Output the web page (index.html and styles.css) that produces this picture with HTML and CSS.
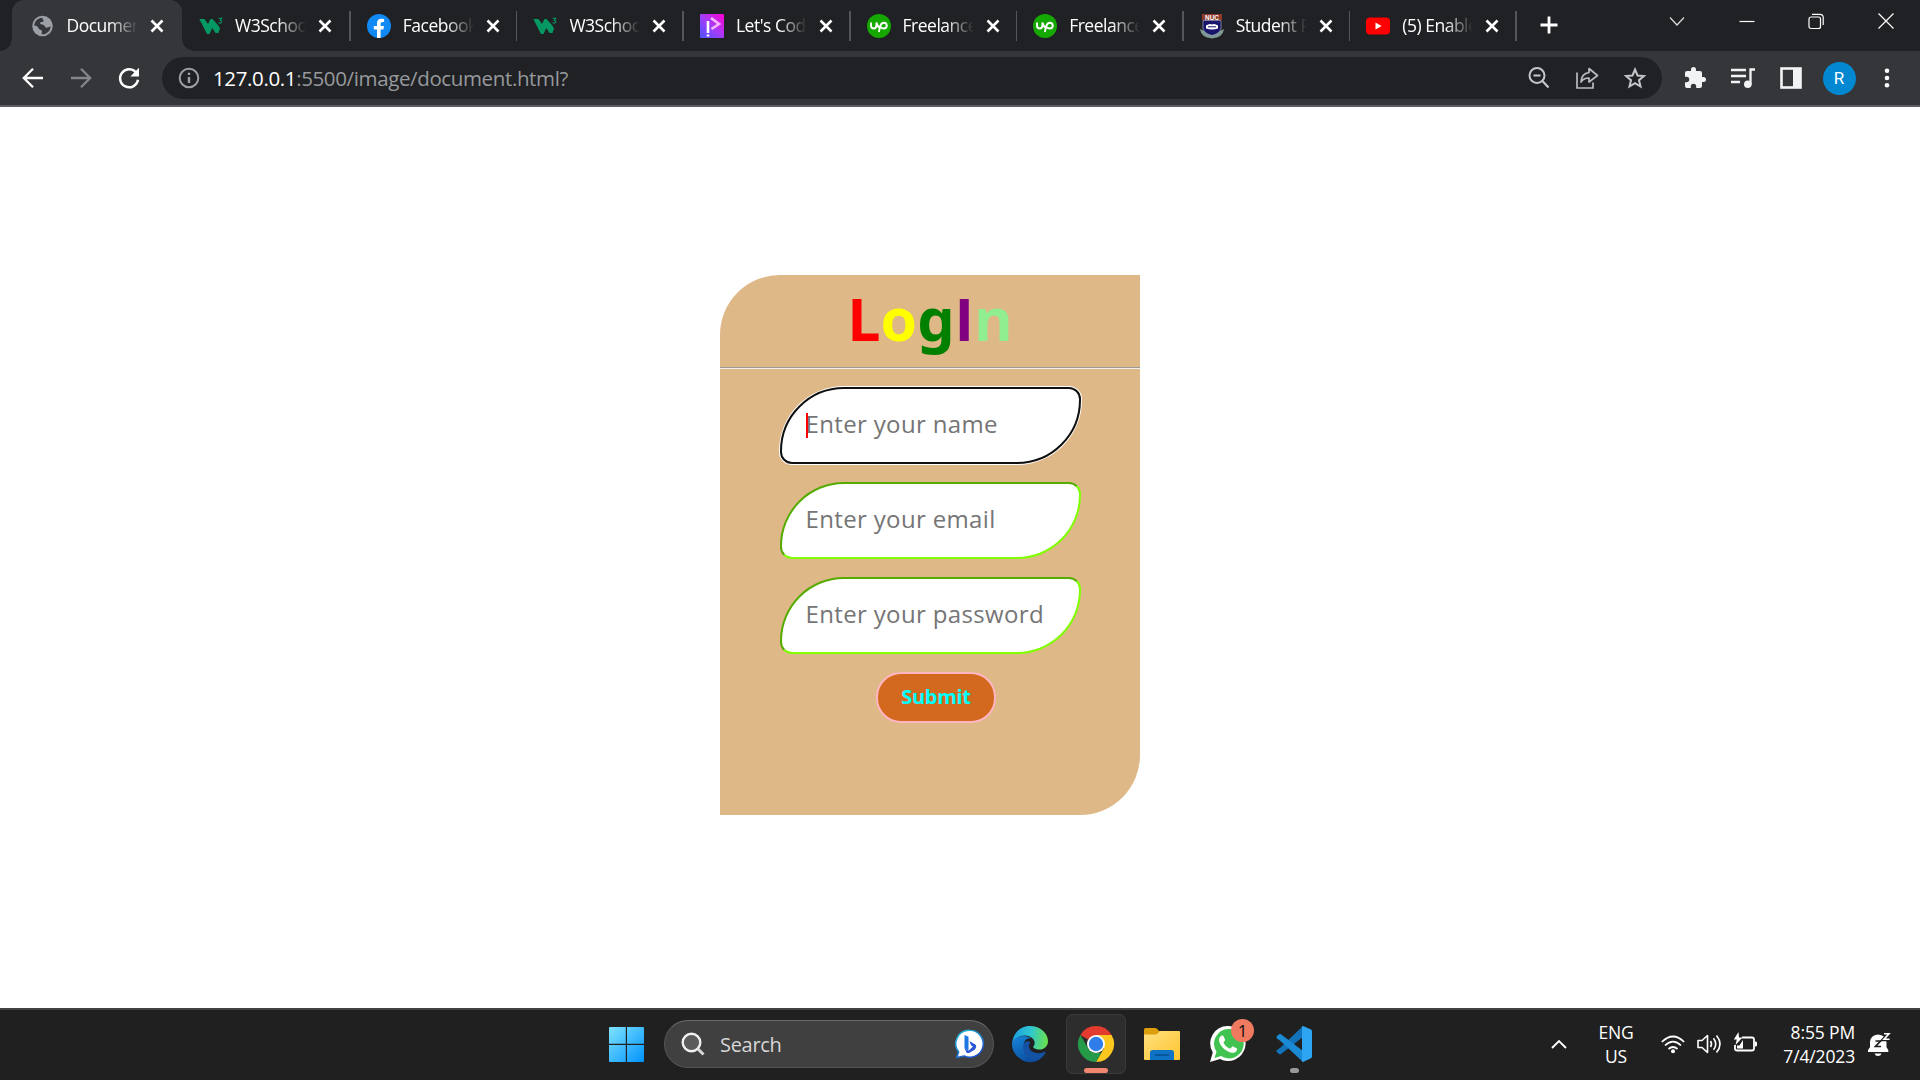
FILE: index.html
```html
<!DOCTYPE html>
<html lang="en">
<head>
<meta charset="utf-8">
<title>Document</title>
<link rel="stylesheet" href="styles.css">
</head>
<body>
<svg width="0" height="0" class="defs">
  <defs>
    <symbol id="close" viewBox="0 0 14 14"><path d="M1.5 1.5 12.5 12.5M12.5 1.5 1.5 12.5" stroke="#fff" stroke-width="2.6" fill="none"/></symbol>
    <symbol id="w3" viewBox="0 0 24 24"><path d="M0.300 5H5.500l3.500 5L11.500 5h2l5.800 6.500 1.700 3-1.500 4.500h-3l-3.200-5L10.500 20H8z" fill="#059862"/><path d="M19.500 4.200h3.300l-1.500 2q2 .4 1.200 2.200-1.200 1.400-3 .2" fill="none" stroke="#059862" stroke-width="1.1"/></symbol>
    <symbol id="up" viewBox="0 0 24 24"><circle cx="12" cy="12" r="12" fill="#14a800"/><path d="M4 8.5v3.400q.2 2.600 2.700 2.600t2.700-2.600V8.500q1.200 4 3.600 6M11.800 18l1.500-6q.9-3.300 3.600-3.300 2.800.2 2.900 2.900-.2 2.800-2.900 2.900-2 0-3.600-1.700" fill="none" stroke="#fff" stroke-width="1.900"/></symbol>
  </defs>
</svg>

<header class="tabs">
  <div class="tab active">
    <svg class="fav" viewBox="0 0 24 24"><circle cx="12" cy="12" r="10.700" fill="#9aa0a6"/><path d="M12 3.300c-.4 2 1.500 2.200 1.200 3.600-.6 1.600-3.400.4-3.700 2.300-.2 1.600 1.900 1 3.200 1.500 2 .8 1.500 3 3.500 3.100 1.500 0 2.400-1.200 4.300-1.300-.2 4.200-3.600 8-8 8.200l-1.600-.2c.4-1.800 1-2.700.2-3.800-.8-1.200-3-.8-3.400-2.700-.3-1.300-2.300-2.500-4.300-2.600C3.500 7.600 7 3.500 12 3.300z" fill="#35363a"/></svg>
    <span class="tab-title">Document</span><svg class="x"><use href="#close"/></svg>
  </div>
  <div class="tab wide"><svg class="fav"><use href="#w3"/></svg><span class="tab-title">W3Schools</span><svg class="x"><use href="#close"/></svg></div>
  <div class="tab">
    <svg class="fav" viewBox="0 0 24 24"><circle cx="12" cy="12" r="12" fill="#1089f5"/><path d="M10 24v-8.500H6.800V12H10V9.300C10 6 12 4.700 14.500 4.700q1.500 0 2.600.3v3h-1.600q-1.900 0-1.900 1.800V12H17l-.6 3.500h-2.800V24z" fill="#fff"/></svg>
    <span class="tab-title">Facebook</span><svg class="x"><use href="#close"/></svg>
  </div>
  <div class="tab"><svg class="fav"><use href="#w3"/></svg><span class="tab-title">W3Schools</span><svg class="x"><use href="#close"/></svg></div>
  <div class="tab">
    <svg class="fav" viewBox="0 0 24 24"><defs><linearGradient id="lc" x1="0" y1="1" x2="1" y2="0"><stop offset=".1" stop-color="#5b50ff"/><stop offset=".5" stop-color="#a53cf5"/><stop offset="1" stop-color="#ff00d4"/></linearGradient></defs><rect width="24" height="24" rx="1" fill="url(#lc)"/><path d="M8 7v12M8 20.500v2" stroke="#fff" stroke-width="2.600"/><path d="M11 4 19 10l-7.500 5" stroke="#f5b8ff" stroke-width="2.600" fill="none"/></svg>
    <span class="tab-title">Let's Code</span><svg class="x"><use href="#close"/></svg>
  </div>
  <div class="tab"><svg class="fav"><use href="#up"/></svg><span class="tab-title">Freelancer</span><svg class="x"><use href="#close"/></svg></div>
  <div class="tab"><svg class="fav"><use href="#up"/></svg><span class="tab-title">Freelancer</span><svg class="x"><use href="#close"/></svg></div>
  <div class="tab">
    <svg class="fav" viewBox="0 0 24 24"><path d="M0 15q1 8.500 12 9.500 11-1 12-9.500l-4 2H4z" fill="#7f9a92"/><path d="M3 6.500h18v8.500q-2 5-9 6.500-7-1.500-9-6.500z" fill="#17166b" stroke="#b8b8cc" stroke-width=".6"/><path d="M6 11.500q3.500-2.500 6-1 2.500-1.500 6 1v3q-6 2-12 0z" fill="#fff"/><path d="M8 12.800h8" stroke="#17166b" stroke-width="1"/><rect x="2" y="0" width="20" height="6" fill="#8d3a2a"/><text x="12" y="5.500" text-anchor="middle" class="crest">NUC</text></svg>
    <span class="tab-title">Student Portal</span><svg class="x"><use href="#close"/></svg>
  </div>
  <div class="tab">
    <svg class="fav" viewBox="0 0 24 24"><rect y="3.500" width="24" height="17" rx="4" fill="#f00"/><path d="M9.500 8.500v7l6-3.500z" fill="#fff"/></svg>
    <span class="tab-title">(5) Enable</span><svg class="x"><use href="#close"/></svg>
  </div>
  <svg class="plus" viewBox="0 0 18 18"><path d="M9 0.500v17M.5 9h17" stroke="#fff" stroke-width="2.800"/></svg>
  <div class="window-controls">
    <svg viewBox="0 0 16 16"><path d="M1 4.500 8 12l7-7.500" stroke="#ddd" stroke-width="1.200" fill="none"/></svg>
    <svg viewBox="0 0 16 16"><path d="M.5 8.500h15" stroke="#fff" stroke-width="1.200"/></svg>
    <svg viewBox="0 0 16 16"><rect x="1" y="4" width="11.500" height="11.500" rx="2" stroke="#fff" stroke-width="1.200" fill="none"/><path d="M4 1.300h8q3.200 0 3.200 3.200V12" stroke="#fff" stroke-width="1.200" fill="none"/></svg>
    <svg viewBox="0 0 16 16"><path d="M.5.500l15 15M15.500.500l-15 15" stroke="#fff" stroke-width="1.200"/></svg>
  </div>
</header>

<nav class="toolbar">
  <div class="nav-buttons">
    <svg viewBox="0 0 24 24"><path d="M22 12H3.500M12 2.800 2.800 12l9.200 9.200" stroke="#fff" stroke-width="2.300" fill="none"/></svg>
    <svg viewBox="0 0 24 24"><path d="M2 12h18.500M12 2.800l9.200 9.200-9.200 9.200" stroke="#85868a" stroke-width="2.300" fill="none"/></svg>
    <svg viewBox="0 0 24 24"><path d="M19.600 7.300A9 9 0 1 0 21 13.800" stroke="#fff" stroke-width="2.500" fill="none"/><path d="M22 1.800V10.500H13.300z" fill="#fff"/></svg>
  </div>
  <div class="address">
    <svg class="info" viewBox="0 0 24 24"><circle cx="12" cy="12" r="9.300" stroke="#9aa0a6" stroke-width="2" fill="none"/><path d="M12 11v6M12 6.800v2.200" stroke="#9aa0a6" stroke-width="2.400"/></svg>
    <div class="url"><b>127.0.0.1</b>:5500/image/document.html?</div>
    <svg viewBox="0 0 24 24"><circle cx="10" cy="9.500" r="7.500" stroke="#c4c7c9" stroke-width="2" fill="none"/><path d="M6.500 9.500h7M15.500 15l6 6.500" stroke="#c4c7c9" stroke-width="2.200"/></svg>
    <svg viewBox="0 0 24 24"><path d="M2 6.500V22h16v-5.500" stroke="#b8babd" stroke-width="1.700" fill="none"/><path d="M14 2.500 22.500 9.500 14 16v-4q-5-.2-8 4 .5-8.500 8-9.500z" stroke="#b8babd" stroke-width="1.700" fill="none" stroke-linejoin="round"/></svg>
    <svg viewBox="0 0 24 24"><path d="m12 3.500 2.500 6 6.400.5-4.900 4.200 1.500 6.300-5.500-3.400-5.500 3.400L8 14.200 3.100 10l6.400-.5z" stroke="#c4c7c9" stroke-width="2" fill="none"/></svg>
  </div>
  <div class="actions">
    <svg viewBox="0 0 24 24"><path d="M20.500 11H19V7a2 2 0 0 0-2-2h-4V3.500a2.500 2.500 0 0 0-5 0V5H4a2 2 0 0 0-2 2v3.800h1.500a2.700 2.700 0 0 1 0 5.400H2V20a2 2 0 0 0 2 2h3.800v-1.500a2.700 2.700 0 0 1 5.400 0V22H17a2 2 0 0 0 2-2v-4h1.500a2.500 2.500 0 0 0 0-5z" fill="#f1f3f4"/></svg>
    <svg viewBox="0 0 24 24"><path d="M0 4h15M0 10h15M0 16h9M19.500 18.500V3.500H24" stroke="#f1f3f4" stroke-width="2.300" fill="none"/><circle cx="16.800" cy="18.300" r="3.800" fill="#f1f3f4"/></svg>
    <svg viewBox="0 0 24 24"><rect x="2.500" y="2.500" width="19" height="19" stroke="#f1f3f4" stroke-width="2.600" fill="none"/><path d="M14 2h8v20h-8z" fill="#f1f3f4"/></svg>
    <span class="avatar">R</span>
    <svg viewBox="0 0 24 24"><g fill="#fff"><circle cx="12" cy="4.700" r="2.300"/><circle cx="12" cy="12" r="2.300"/><circle cx="12" cy="19.300" r="2.300"/></g></svg>
  </div>
</nav>

<main class="page">
  <form class="card">
    <h1><span class="c1">L</span><span class="c2">o</span><span class="c3">g</span><span class="c4">I</span><span class="c5">n</span></h1>
    <hr>
    <div class="field focused"><i class="caret"></i>Enter your name</div>
    <div class="field">Enter your email</div>
    <div class="field">Enter your password</div>
    <button type="button" class="submit">Submit</button>
  </form>
</main>

<footer class="taskbar">
  <div class="apps">
    <svg class="start" viewBox="0 0 35 35"><defs><linearGradient id="win" x1="0" y1="0" x2="1" y2="1"><stop stop-color="#7fe3ff"/><stop offset="1" stop-color="#0093fb"/></linearGradient></defs><path d="M1 0h15.800v16.800H0V1q0-1 1-1zM18 0h16q1 0 1 1v15.800H18zM0 18h16.800v17H1q-1 0-1-1zM18 18h17v16q0 1-1 1H18z" fill="url(#win)"/></svg>
    <div class="search">
      <svg class="lens" viewBox="0 0 24 24"><circle cx="10.500" cy="10.500" r="8.800" fill="#5b5b5b" stroke="#f0f0f0" stroke-width="2.400"/><path d="M17 17l5.500 5.500" stroke="#d8d8d8" stroke-width="3"/></svg>
      <span>Search</span>
      <svg class="bing" viewBox="0 0 30 30"><defs><linearGradient id="bing" x1="0" y1="0" x2=".6" y2="1"><stop stop-color="#25c4dc"/><stop offset="1" stop-color="#1b4fc4"/></linearGradient></defs><path d="M15 1.300a13.500 13.500 0 1 1-6 25.700L1.800 28.500l1.800-5.500A13.500 13.500 0 0 1 15 1.300z" fill="#fff" stroke="url(#bing)" stroke-width="1.600"/><path d="M9.500 6l4 1.700v14l-4-2.400z" fill="#1c78e0"/><path d="M13.500 21.700l-4-2.400 2 4.200q1.300 1 3 .2l5.500-3.300q2-1.800 1-4.400l-6.500-4 1.500 4.300 2 1.200z" fill="#2a55d8"/></svg>
    </div>
    <svg class="app edge" viewBox="0 0 36 36"><defs><linearGradient id="e1" x1="0" y1=".4" x2="1" y2=".5"><stop stop-color="#1b9de2"/><stop offset=".5" stop-color="#30c7d0"/><stop offset="1" stop-color="#69e04b"/></linearGradient><linearGradient id="e2" x1="0" y1="0" x2=".6" y2="1"><stop stop-color="#1686d9"/><stop offset="1" stop-color="#0c4a9c"/></linearGradient></defs><path d="M.2 18C.5 7.500 8 0 18 0c10.500 0 18 7.500 18 15.200 0 5-3.800 8.300-8.500 8.300-4.200 0-6.500-1.800-6.200-3 1.500-1.500 2-4.500.2-7C17 7.800 5 7.500.2 18z" fill="url(#e1)"/><path d="M.1 17C3 9.500 14 8 19.500 12.500c-6-1-8.500 4-7.500 8.500 1.500 7 8.500 9.500 13.500 9.500q4 0 7.500-3.200C28 37 17 38 10 34 2.500 29.800-.5 23 .1 17z" fill="url(#e2)"/><path d="M12.300 17C9 24 14 34 24 34q6-1.500 9.700-7.500c.3-.6-.5-1-1-.7-3 1.700-7.400 1.800-10.700.4-5-2-6.500-6-3.500-10-2.500-1.500-5-.9-6.200.8z" fill="#1352a4"/></svg>
    <div class="tile">
      <svg class="app" viewBox="0 0 36 36"><path d="M18 18 2.400 9A18 18 0 0 1 33.600 9z" fill="#e33b2e"/><path d="M18 9h15.600A18 18 0 0 1 18 36l7.800-13.500z" fill="#fcc71e"/><path d="M2.400 9 10.200 22.500q3 4.500 7.800 4.500h5.200L18 36A18 18 0 0 1 2.400 9z" fill="#259a48"/><circle cx="18" cy="18" r="9" fill="#fff"/><circle cx="18" cy="18" r="7.200" fill="#2f7de9"/></svg>
      <i class="running"></i>
    </div>
    <svg class="app folder" viewBox="0 0 36 36"><defs><linearGradient id="fo" x1="0" y1="0" x2="1" y2="1"><stop stop-color="#ffe081"/><stop offset="1" stop-color="#ffc52d"/></linearGradient></defs><path d="M0 3.500Q0 2 1.500 2H11q1.200 0 2 .8L16 6v5H0z" fill="#dd9f0c"/><path d="M0 8.500h11.500q1.500 0 2.500-1.200L15.500 5H35q1 0 1 1v27q0 1-1 1H1q-1 0-1-1z" fill="url(#fo)"/><path d="M6 34v-7.500Q6 24 8.500 24h19q2.500 0 2.500 2.500V34z" fill="#0f73c5"/><path d="M11 29h14" stroke="#084f92" stroke-width="1.600"/></svg>
    <div class="badged">
      <svg class="app" viewBox="0 0 36 36"><path d="M18.500 0A17.500 17.500 0 1 1 10 33L0 36l2.800-9.500A17.500 17.500 0 0 1 18.500 0z" fill="#fff"/><path d="M18.500 3A14.700 14.700 0 1 1 11 30l-6.500 2 2-6.300A14.700 14.700 0 0 1 18.500 3z" fill="#40c351"/><path d="M13.200 9.500l2 4.500-1.700 2.700q2.300 4.400 6.700 6l2.300-2.500 4.500 2.200c.2 3-2.400 4.600-5 4.400-6-1-12-6.500-13-12-.2-2.700 1.300-5.600 4.200-5.300z" fill="#fff"/></svg>
      <span class="badge">1</span>
    </div>
    <div class="badged">
      <svg class="app" viewBox="0 0 36 36"><path d="M27 0 4.500 21.500 1 24q-1.500 1 0 2.200l2 1.800q1 .6 2 0L27 11z" fill="#1272ba"/><path d="M27 36 4.500 15 1 12.400q-1.300-1 0-2.300l2-1.800q1-.6 2 0L27 25z" fill="#1a8ad4"/><path d="M27 0l8 3.600q1 .6 1 1.800v25q0 1.200-1 1.800L27 36q-1 .2-1-1V1q0-1.200 1-1z" fill="#2ea5f3"/></svg>
      <i class="idle"></i>
    </div>
  </div>
  <div class="tray">
    <svg class="chev" viewBox="0 0 16 10"><path d="M1 9l7-7 7 7" stroke="#fff" stroke-width="1.900" fill="none"/></svg>
    <div class="lang">ENG<br>US</div>
    <div class="status">
      <svg viewBox="0 0 24 24"><g stroke="#fff" stroke-width="1.700" fill="none"><path d="M.8 10q11.200-11 22.400 0M4 13.500q8-7.600 16 0M7.500 17q4.500-4 9 0"/></g><circle cx="12" cy="19.200" r="2" fill="#fff"/></svg>
      <svg viewBox="0 0 24 24"><g stroke="#fff" stroke-width="1.600" fill="none" stroke-linejoin="round"><path d="M1 8.500h4L10.500 3.500v17L5 15.500H1zM13.500 9q2 3 0 6M16.500 6.200q4.500 5.800 0 11.600M19.500 3.500q7 8.500 0 17"/></g></svg>
      <svg viewBox="0 0 24 24"><path d="M9 5.500h10q2 0 2 2v9q0 2-2 2H4q-2 0-2-2V13" stroke="#fff" stroke-width="1.800" fill="none"/><path d="M22 9.500h1q1 .2 1 1.200v2.500q0 1-1 1.200h-1zM4 13.500h2.500L10 8v8.500H4z" fill="#fff"/><path d="M5.500 0 .8 7.500h3L2.500 13 9.500 5.500H6z" fill="#fff"/></svg>
    </div>
    <div class="clock">8:55 PM<br>7/4/2023</div>
    <svg class="bell" viewBox="0 0 24 24"><path d="M1 20v-2l2-2.800V10q.5-7 8-7.500 8 .5 8.500 7.500v5.200l1.800 2.800v2zM7.500 21.500h7q-.8 2.500-3.500 2.500t-3.500-2.500z" fill="#fff"/><path d="M8.500 9h5l-5 5.500h5.500" stroke="#202020" stroke-width="1.700" fill="none"/><path d="M17 1.800h5L17 7.300h5.500" stroke="#202020" stroke-width="4" fill="none"/><path d="M17 1.800h5L17 7.300h5.500" stroke="#fff" stroke-width="1.600" fill="none"/></svg>
  </div>
</footer>
</body>
</html>
```
FILE: styles.css
```css
* { box-sizing: border-box; }
body {
  margin: 0;
  width: 1920px;
  height: 1080px;
  overflow: hidden;
  display: flex;
  flex-direction: column;
  background: #fff;
  font-family: "Open Sans", "Noto Sans", sans-serif;
}
svg { display: block; flex: none; overflow: visible; }
.defs { position: absolute; }

/* Tab strip */
.tabs {
  height: 51px;
  flex: none;
  display: flex;
  padding-left: 15.5px;
  background: #202124;
}
.tab {
  position: relative;
  width: 166.6px;
  flex: none;
  height: 51px;
  display: flex;
  align-items: center;
  padding-left: 16px;
}
.tab.active { width: 167.500px; }
.tab.wide { width: 167.800px; }
.tab:not(.active)::after {
  content: "";
  position: absolute;
  right: 0;
  top: 11px;
  width: 1.5px;
  height: 30px;
  background: #55565a;
}
.tab.active::before {
  content: "";
  position: absolute;
  left: -3.5px;
  right: 1px;
  top: 0;
  bottom: 0;
  border-radius: 12px 12px 0 0;
  background: #35363a;
}
.tab.active::after {
  content: "";
  position: absolute;
  left: -15.5px;
  right: -11px;
  bottom: 0;
  height: 12px;
  background:
    radial-gradient(circle at 0 0, transparent 11.5px, #35363a 12px) left / 12px 12px no-repeat,
    radial-gradient(circle at 100% 0, transparent 11.5px, #35363a 12px) right / 12px 12px no-repeat;
}
.tab > * { z-index: 1; }
.fav { width: 24px; height: 24px; }
.active .fav { width: 23px; margin-right: 1px; margin-left: -1px; }
.tab-title {
  width: 71px;
  margin: -2px 0 0 12px;
  overflow: hidden;
  white-space: nowrap;
  font-size: 17.5px;
  line-height: 26px;
  letter-spacing: -0.5px;
  color: #fff;
  -webkit-mask-image: linear-gradient(90deg, #000 60%, transparent);
  mask-image: linear-gradient(90deg, #000 60%, transparent);
}
.x { width: 14px; height: 14px; margin-left: 12px; }
.crest { font: bold 6.5px "Liberation Sans", sans-serif; fill: #fff; }
.plus { width: 18px; height: 18px; margin: 16px 0 0 23.500px; }
.window-controls { display: flex; gap: 53.5px; margin: 13px 0 0 auto; padding-right: 26.500px; }
.window-controls svg { width: 16px; height: 16px; }

/* Toolbar */
.toolbar {
  height: 56px;
  flex: none;
  display: flex;
  align-items: center;
  background: #35363a;
  border-bottom: 2px solid #5c5d60;
  padding-left: 21px;
}
.nav-buttons { display: flex; gap: 24px; width: 141px; }
.nav-buttons svg { width: 24px; height: 24px; }
.address {
  width: 1500px;
  height: 42px;
  border-radius: 21px;
  background: #202124;
  display: flex;
  align-items: center;
  gap: 24px;
  padding: 0 15px;
}
.address svg { width: 24px; height: 24px; }
.url { flex: 1; margin-left: -12px; font-size: 20.5px; letter-spacing: -0.37px; color: #97999c; }
.url b { font-weight: 400; color: #fff; }
.actions { display: flex; align-items: center; gap: 24px; margin-left: 21px; }
.actions svg { width: 24px; height: 24px; }
.avatar {
  width: 33px;
  height: 33px;
  margin: 0 -4.500px;
  border-radius: 50%;
  background: #0288d1;
  color: #fff;
  font: 17px/33px Roboto, sans-serif;
  text-align: center;
}

/* Login form */
.page { flex: 1; padding-top: 168px; }
.card {
  width: 420px;
  height: 540px;
  margin-left: 720px;
  border-radius: 60px 0;
  background: burlywood;
  display: flex;
  flex-direction: column;
  align-items: center;
}
h1 { margin: 0; height: 92px; font-size: 59px; line-height: 86px; font-weight: 700; letter-spacing: 0; }
.c1 { color: red; }
.c2 { color: yellow; }
.c3 { color: green; font-family: "Noto Sans", sans-serif; }
.c4 { color: purple; }
.c5 { color: lightgreen; }
hr { width: 420px; height: 2px; margin: 0 0 18px; border: 0; border-top: 1px solid #9a9a9a; border-bottom: 1px solid #eee; }
.field {
  position: relative;
  width: 301px;
  height: 77px;
  flex: none;
  margin-bottom: 18px;
  padding-left: 24px;
  border: 2px inset chartreuse;
  border-radius: 64px 12px;
  background: #fff;
  font-size: 24px;
  line-height: 70px;
  letter-spacing: .35px;
  white-space: nowrap;
  color: #757575;
}
.focused { border-color: #101010; border-style: solid; box-shadow: 0 0 0 1px #fff; }
.caret { position: absolute; left: 24px; top: 24px; width: 2px; height: 25px; background: red; }
.submit {
  width: 120px;
  height: 51px;
  margin-left: 12px;
  padding: 0 0 3px;
  border: 2px solid lightpink;
  border-radius: 25px;
  background: chocolate;
  color: aqua;
  font: 700 20px "Open Sans", sans-serif;
  letter-spacing: -.3px;
}

/* Taskbar */
.taskbar {
  height: 72px;
  flex: none;
  display: flex;
  justify-content: space-between;
  padding-bottom: 2px;
  background: #202020;
  border-top: 2px solid #424242;
  color: #fff;
}
.apps { display: flex; align-items: center; padding-left: 609px; }
.start { width: 35px; height: 35px; margin-right: 20px; }
.search {
  width: 330px;
  height: 48px;
  margin-right: 18px;
  display: flex;
  align-items: center;
  border: 1px solid #555;
  border-top-color: #6a6a6a;
  border-radius: 24px;
  background: #404040;
  padding: 0 8px 0 16px;
  font-size: 20px;
  color: #d6d6d6;
}
.search span { flex: 1; margin-left: 15px; letter-spacing: -.3px; }
.lens { width: 24px; height: 24px; }
.bing { width: 30px; height: 30px; }
.app { width: 36px; height: 36px; }
.tile {
  position: relative;
  width: 60px;
  height: 60px;
  margin: 0 18px;
  display: grid;
  place-items: center;
  border: 1px solid #3a3a3a;
  border-radius: 6px;
  background: #2d2d2d;
}
.running { position: absolute; left: 17px; bottom: 0; width: 24px; height: 5px; border-radius: 3px; background: #f08570; }
.badged { position: relative; margin-left: 30px; }
.badge {
  position: absolute;
  left: 21px;
  top: -7px;
  width: 23px;
  height: 23px;
  border-radius: 50%;
  background: #f07a60;
  color: #111;
  font-size: 17px;
  line-height: 24px;
  text-align: center;
}
.idle { position: absolute; left: 14px; bottom: -11px; width: 9px; height: 5px; border-radius: 3px; background: #999; }
.tray { display: flex; align-items: center; padding-right: 29px; font-size: 17.5px; line-height: 24px; letter-spacing: -.15px; }
.chev { width: 16px; height: 10px; margin-right: 30px; }
.lang { width: 38px; text-align: center; }
.status { display: flex; gap: 12px; margin: 0 0 0 26px; }
.status svg { width: 24px; height: 24px; }
.clock { width: 98px; text-align: right; }
.bell { width: 24px; height: 24px; margin-left: 12px; }
```
